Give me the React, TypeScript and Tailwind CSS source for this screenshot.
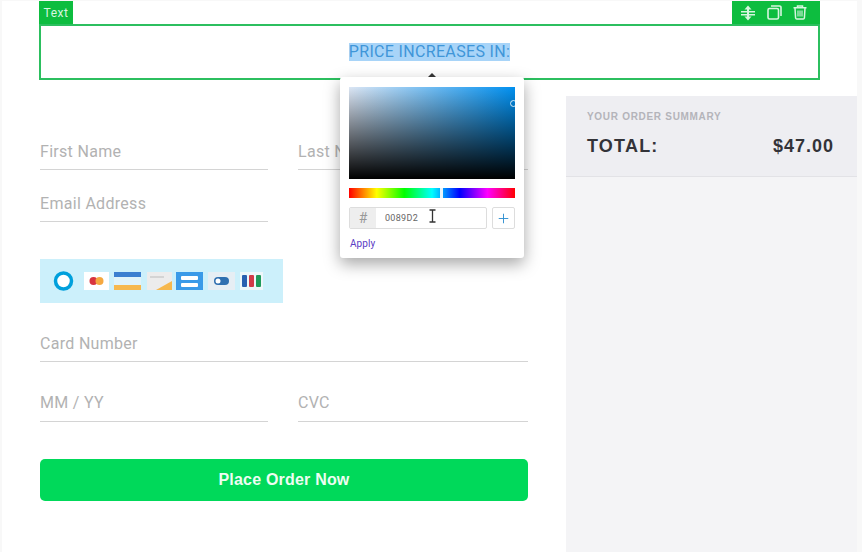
import { Plus } from 'lucide-react';

const font = "font-['Roboto',sans-serif]";
const boldFont = "font-['Liberation_Sans',sans-serif] font-bold";

function Field({ label, className = '' }: { label: string; className?: string }) {
    return (
        <div className={`h-[37px] border-b border-[#d4d4d4] text-[16px] leading-[38px] tracking-[0.3px] text-[#b2b2b2] ${className}`}>
            {label}
        </div>
    );
}

function MoveIcon() {
    return (
        <svg width="16" height="16" viewBox="0 0 16 16" fill="#d8f5e0">
            <rect x="1" y="6" width="14" height="1.5" />
            <rect x="1" y="9" width="14" height="1.5" />
            <rect x="7" y="3" width="2" height="10" />
            <path d="M8 0.5 L11.5 4.5 H4.5 Z" />
            <path d="M8 15.5 L11.5 11.5 H4.5 Z" />
        </svg>
    );
}

function CopyIcon() {
    return (
        <svg width="15" height="15" viewBox="0 0 15 15" fill="none" stroke="#d8f5e0" strokeWidth="1.6">
            <rect x="1" y="3.5" width="10.5" height="10.5" rx="1.5" />
            <path d="M4 1 H12.5 A1.5 1.5 0 0 1 14 2.5 V11" />
        </svg>
    );
}

function TrashIcon() {
    return (
        <svg width="14" height="15" viewBox="0 0 14 15" fill="none" stroke="#d8f5e0" strokeWidth="1.5">
            <path d="M0.5 2.8 H13.5 M4.5 2.5 V1 H9.5 V2.5" />
            <path d="M2 3 L2.6 13 A1.2 1.2 0 0 0 3.8 14 H10.2 A1.2 1.2 0 0 0 11.4 13 L12 3" />
            <path d="M5 5.5 V11.5 M7 5.5 V11.5 M9 5.5 V11.5" strokeWidth="1.1" />
        </svg>
    );
}

function CardStrip() {
    return (
        <svg width="243" height="44" viewBox="0 0 243 44">
            <circle cx="23.5" cy="22" r="8" fill="#fff" stroke="#00a0dc" strokeWidth="3.5" />
            <rect x="44" y="13" width="25" height="18" fill="#fff" />
            <circle cx="53.5" cy="22" r="4" fill="#d8343f" />
            <circle cx="59.5" cy="22" r="4" fill="#f5a840" />
            <rect x="74" y="13" width="27" height="18" fill="#dff3fa" />
            <rect x="74" y="13" width="27" height="5" fill="#3b7fd0" />
            <rect x="74" y="26" width="27" height="5" fill="#f6b84e" />
            <rect x="107" y="13" width="25" height="18" fill="#ececec" />
            <rect x="110" y="17" width="14" height="2" fill="#d4d4d4" />
            <path d="M116 31 L132 22 V31 Z" fill="#f6b84e" />
            <rect x="136" y="13" width="27" height="18" fill="#3a9ae8" />
            <rect x="141" y="17" width="17" height="4" rx="1" fill="#fff" />
            <rect x="141" y="24" width="17" height="4" rx="1" fill="#fff" />
            <rect x="168" y="13" width="27" height="18" fill="#e6eef4" />
            <rect x="174" y="18" width="15" height="8" rx="4" fill="#2f6fb0" />
            <circle cx="178" cy="22" r="2.5" fill="#fff" />
            <rect x="200" y="13" width="23" height="18" fill="#eef6fa" />
            <rect x="202" y="16" width="5" height="12" rx="1" fill="#2a5fb0" />
            <rect x="209" y="16" width="5" height="12" rx="1" fill="#d23a48" />
            <rect x="216" y="16" width="5" height="12" rx="1" fill="#1f9a5a" />
        </svg>
    );
}

function ColorPopover() {
    return (
        <div className="absolute left-[340px] top-[77px] h-[181px] w-[184px] rounded-[3px] bg-white px-[9px] pt-[10px] shadow-[0_6px_16px_rgba(0,0,0,0.35)]">
            <div className="absolute left-[88px] top-[-4px] h-0 w-0 border-x-[4px] border-b-[4px] border-x-transparent border-b-[#333]" />
            <div className="relative h-[92px] bg-[linear-gradient(to_top,#000,transparent),linear-gradient(to_right,#dce6f4,#0090f0)]">
                <div className="absolute right-[-2px] top-[13px] h-[7px] w-[7px] rounded-full border border-white/80" />
            </div>
            <div className="relative mt-[9px] h-[10px] bg-[linear-gradient(to_right,#f00,#ff0,#0f0,#0ff,#00f,#f0f,#f00)]">
                <div className="absolute left-[91px] top-0 h-[10px] w-[3px] bg-[#e8f4fa]" />
            </div>
            <div className="mt-[9px] flex h-[22px] gap-[5px]">
                <div className="flex w-[138px] overflow-hidden rounded-[2px] border border-[#dddddd] bg-white">
                    <div className="flex w-[26px] items-center justify-center bg-[#eeeeee] text-[14px] text-[#999999]">#</div>
                    <div className="relative flex-1 pl-[9px] text-[9px] leading-[20px] tracking-[0.3px] text-[#666666]">
                        0089D2
                        <svg className="absolute left-[53px] top-[1px]" width="7" height="14" viewBox="0 0 7 14" fill="none" stroke="#333" strokeWidth="1.3">
                            <path d="M0.5 1 H6.5 M3.5 1 V13 M0.5 13 H6.5" />
                        </svg>
                    </div>
                </div>
                <div className="flex w-[23px] items-center justify-center rounded-[2px] border border-[#dddddd] text-[#2f8fd0]">
                    <Plus size={15} strokeWidth={1.5} />
                </div>
            </div>
            <div className="mt-[9px] pl-px text-[10px] leading-[12px] tracking-[0.1px] text-[#5b3cc4]">Apply</div>
        </div>
    );
}

export default function App() {
    return (
        <div className={`relative h-[552px] w-[862px] overflow-hidden bg-[#f8f8f8] pl-[2px] pr-[5px] pt-px ${font}`}>
            <div className="flex h-[551px] flex-col bg-white">
                <header className="h-[95px] pl-[37px] pr-[37px]">
                    <div className="flex h-[23px] items-stretch justify-between">
                        <div className="flex w-[34px] items-center justify-center bg-[#0dbd3f] text-[12px] tracking-[0.5px] text-[#d8f5e0]">Text</div>
                        <div className="flex w-[88px] items-center gap-[11px] bg-[#0dbd3f] pl-[8px] text-[#d8f5e0]">
                            <MoveIcon />
                            <CopyIcon />
                            <TrashIcon />
                        </div>
                    </div>
                    <div className="flex h-[56px] items-center justify-center border-2 border-[#2cbf5f]">
                        <span className="bg-[#a8d4f8] text-[16px] leading-[18px] tracking-[0.33px] text-[#3f96d8]">PRICE INCREASES IN:</span>
                    </div>
                </header>
                <main className="flex flex-1">
                    <div className="w-[564px] pl-[38px] pr-[38px] pt-[37px]">
                        <div className="flex gap-[30px]">
                            <Field label="First Name" className="w-[228px]" />
                            <Field label="Last Name" className="w-[230px]" />
                        </div>
                        <Field label="Email Address" className="mt-[15px] w-[228px]" />
                        <div className="mt-[37px] h-[44px] w-[243px] bg-[#ccf0fb]">
                            <CardStrip />
                        </div>
                        <Field label="Card Number" className="mt-[22px]" />
                        <div className="mt-[22px] flex gap-[30px]">
                            <Field label="MM / YY" className="h-[38px] w-[228px]" />
                            <Field label="CVC" className="h-[38px] w-[230px]" />
                        </div>
                        <button className={`mt-[37px] h-[42px] w-full rounded-[5px] bg-[#00d95a] text-[16px] tracking-[0.2px] text-[#eefdf2] ${boldFont}`}>
                            Place Order Now
                        </button>
                    </div>
                    <aside className="flex-1 bg-[#f4f4f6]">
                        <div className={`h-[81px] border-b border-[#e2e2e6] bg-[#eeeef2] pl-[21px] pr-[23px] pt-[15px] ${boldFont}`}>
                            <div className="text-[10px] leading-[12px] tracking-[0.7px] text-[#b4b4ba]">YOUR ORDER SUMMARY</div>
                            <div className="mt-[11px] flex items-center justify-between text-[18px] leading-[24px] text-[#333338]">
                                <span className="tracking-[1.2px]">TOTAL:</span>
                                <span className="tracking-[1px]">$47.00</span>
                            </div>
                        </div>
                    </aside>
                </main>
            </div>
            <ColorPopover />
        </div>
    );
}
